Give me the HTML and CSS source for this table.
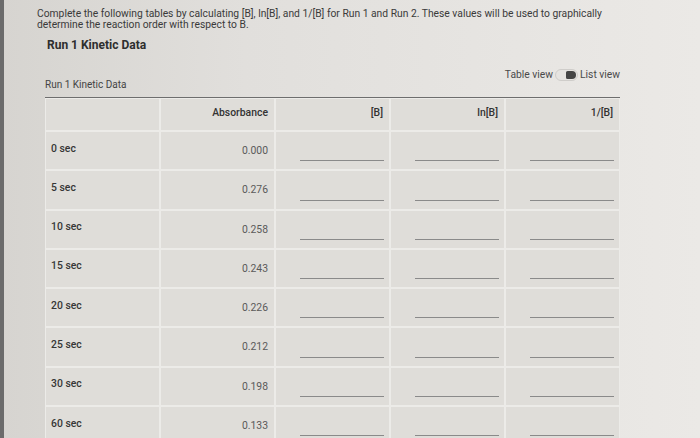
FILE: index.html
```html
<!DOCTYPE html>
<html lang="en">
<head>
<meta charset="utf-8">
<title>Run 1 Kinetic Data</title>
<link rel="stylesheet" href="styles.css">
</head>
<body>
<div class="page">
  <p class="intro">Complete the following tables by calculating [B], ln[B], and 1/[B] for Run 1 and Run 2. These values will be used to graphically determine the reaction order with respect to B.</p>
  <h2 class="title">Run 1 Kinetic Data</h2>
  <div class="bar">
    <span class="caption">Run 1 Kinetic Data</span>
    <div class="toggle">
      <span>Table view</span>
      <span class="switch"><span class="knob"></span></span>
      <span>List view</span>
    </div>
  </div>
  <div class="table">
    <div class="cell head"></div>
    <div class="cell head">Absorbance</div>
    <div class="cell head">[B]</div>
    <div class="cell head">ln[B]</div>
    <div class="cell head">1/[B]</div>

    <div class="cell label">0 sec</div><div class="cell val">0.000</div><div class="cell in"><span class="line"></span></div><div class="cell in"><span class="line"></span></div><div class="cell in"><span class="line"></span></div>
    <div class="cell label">5 sec</div><div class="cell val">0.276</div><div class="cell in"><span class="line"></span></div><div class="cell in"><span class="line"></span></div><div class="cell in"><span class="line"></span></div>
    <div class="cell label">10 sec</div><div class="cell val">0.258</div><div class="cell in"><span class="line"></span></div><div class="cell in"><span class="line"></span></div><div class="cell in"><span class="line"></span></div>
    <div class="cell label">15 sec</div><div class="cell val">0.243</div><div class="cell in"><span class="line"></span></div><div class="cell in"><span class="line"></span></div><div class="cell in"><span class="line"></span></div>
    <div class="cell label">20 sec</div><div class="cell val">0.226</div><div class="cell in"><span class="line"></span></div><div class="cell in"><span class="line"></span></div><div class="cell in"><span class="line"></span></div>
    <div class="cell label">25 sec</div><div class="cell val">0.212</div><div class="cell in"><span class="line"></span></div><div class="cell in"><span class="line"></span></div><div class="cell in"><span class="line"></span></div>
    <div class="cell label">30 sec</div><div class="cell val">0.198</div><div class="cell in"><span class="line"></span></div><div class="cell in"><span class="line"></span></div><div class="cell in"><span class="line"></span></div>
    <div class="cell label">60 sec</div><div class="cell val">0.133</div><div class="cell in"><span class="line"></span></div><div class="cell in"><span class="line"></span></div><div class="cell in"><span class="line"></span></div>
  </div>
</div>
</body>
</html>
```
FILE: styles.css
```css
html, body {
  margin: 0;
  height: 100%;
  overflow: hidden;
}
body {
  background: linear-gradient(90deg, #d6d4d0 0%, #e1dfdc 35%, #ebe9e6 100%);
  font-family: Roboto, "Liberation Sans", sans-serif;
  color: #333;
  border-left: 4px solid #6b6b6b;
  box-sizing: border-box;
}
.page {
  padding: 9px 0 0 33px;
  width: 588px;
}
.intro {
  margin: 0;
  font-size: 10.3px;
  line-height: 10.5px;
  color: #3a3a3a;
  width: 580px;
}
.title {
  margin: 8px 0 0 10px;
  font-size: 12px;
  font-weight: 700;
  line-height: 14px;
  color: #2e2e2e;
}
.bar {
  display: flex;
  justify-content: space-between;
  align-items: flex-end;
  margin: 0 0 0 8px;
  height: 43px;
  width: 575px;
}
.caption {
  font-size: 10px;
  color: #444;
  line-height: 11px;
  padding-bottom: 5px;
}
.toggle {
  display: flex;
  align-items: center;
  gap: 2px;
  font-size: 10.3px;
  line-height: 12px;
  color: #4a4a4a;
  align-self: flex-start;
  margin-top: 17px;
}
.switch {
  width: 21px;
  height: 10px;
  border: 1px solid #cfcdca;
  border-radius: 6px;
  background: #e6e4e1;
  position: relative;
  display: inline-block;
}
.knob {
  position: absolute;
  right: 1px;
  top: 1px;
  width: 10px;
  height: 8px;
  border-radius: 2px 5px 5px 2px;
  background: #454545;
}
.table {
  margin: 2px 0 0 8px;
  width: 575px;
  box-sizing: border-box;
  border-top: 1.5px solid #6e6e6e;
  display: grid;
  grid-template-columns: repeat(5, 1fr);
  grid-template-rows: 31px;
  grid-auto-rows: 37.3px;
  gap: 2px;
  background: #ecebe8;
  padding: 1px 1px 0 1px;
}
.cell {
  background: #dfddd9;
  font-size: 10.4px;
  line-height: 12px;
  position: relative;
}
.head {
  text-align: right;
  padding: 8px 6px 0 0;
  font-weight: 500;
  color: #333;
}
.label {
  padding: 10.5px 0 0 5px;
  font-weight: 500;
  color: #363636;
}
.val {
  text-align: right;
  padding: 13px 6px 0 0;
  color: #5a5a5a;
}
.in {
  display: flex;
  align-items: flex-end;
  padding: 0 5px 8px 24px;
}
.line {
  flex: 1;
  height: 1px;
  background: #8a8a8a;
}
```
